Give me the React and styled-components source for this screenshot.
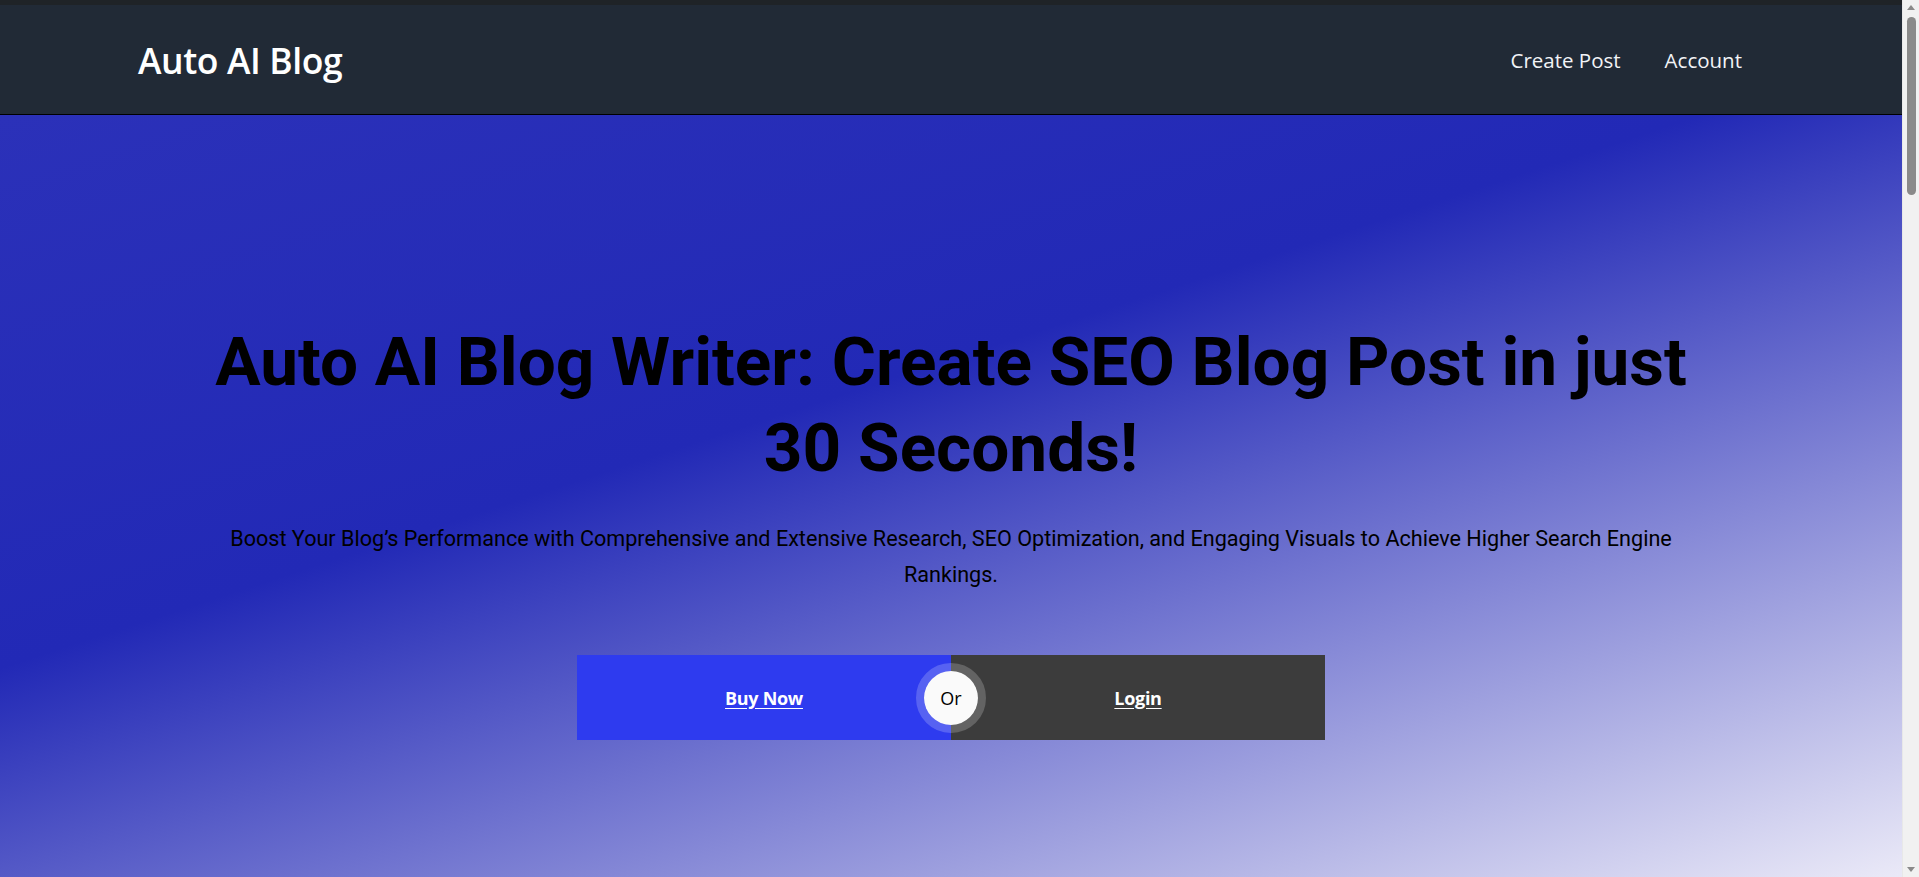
import React from "react";
import styled, { createGlobalStyle } from "styled-components";

const GlobalStyle = createGlobalStyle`
  *, *::before, *::after { box-sizing: border-box; }
  html, body { margin: 0; padding: 0; }
  body {
    font-family: "Open Sans", "Noto Sans", sans-serif;
    background: #f1f1f1;
  }
`;

const Page = styled.div`
  display: flex;
  flex-direction: column;
  margin-right: 17px;
`;

const ScrollTrack = styled.div`
  position: fixed;
  top: 0;
  right: 0;
  width: 17px;
  height: 100vh;
  background: #f1f1f1;
  border-left: 1px solid #e8e8e8;
`;

const ScrollThumb = styled.div`
  position: absolute;
  top: 17px;
  left: 4px;
  width: 9px;
  height: 178px;
  border-radius: 5px;
  background: #8a8a8a;
`;

const ScrollArrow = styled.div`
  position: absolute;
  left: 4px;
  width: 0;
  height: 0;
  border-left: 4.5px solid transparent;
  border-right: 4.5px solid transparent;
  ${(p) =>
    p.$dir === "up"
      ? "top: 5px; border-bottom: 5px solid #8a8a8a;"
      : "bottom: 5px; border-top: 5px solid #8a8a8a;"}
`;

const NavBar = styled.header`
  height: 115px;
  border-top: 5px solid #1f2327;
  border-bottom: 1px solid #000000;
  background: #212a36;
  display: flex;
  align-items: center;
  justify-content: space-between;
  padding: 0 138px;
`;

const Brand = styled.a`
  font-family: "Open Sans", "Noto Sans", sans-serif;
  font-size: 35.5px;
  font-weight: 600;
  color: #ffffff;
  text-decoration: none;
  letter-spacing: -0.4px;
`;

const NavLinks = styled.nav`
  display: flex;
  align-items: center;
`;

const NavLink = styled.a`
  font-family: "Open Sans", "Noto Sans", sans-serif;
  font-size: 20.5px;
  color: #f2f4f7;
  text-decoration: none;
  padding: 0 22px;
`;

const Hero = styled.section`
  min-height: 100vh;
  background: linear-gradient(162deg, #2b31b9 0%, #2229b6 37%, #e9e8f7 92%, #f4f3fb 100%);
  display: flex;
  flex-direction: column;
  align-items: center;
  padding-top: 204px;
`;

const Title = styled.h1`
  margin: 0;
  max-width: 1500px;
  font-family: Roboto, "Liberation Sans", sans-serif;
  font-weight: 700;
  font-size: 67.5px;
  line-height: 85.6px;
  color: #000000;
  text-align: center;
`;

const Subtitle = styled.p`
  margin: 31px 0 0;
  max-width: 1500px;
  font-family: Roboto, "Liberation Sans", sans-serif;
  font-size: 21.6px;
  line-height: 36px;
  color: #000000;
  text-align: center;
`;

const ButtonGroup = styled.div`
  position: relative;
  margin-top: 62px;
  display: flex;
  width: 748px;
  height: 85px;
`;

const ActionButton = styled.a`
  flex: 1;
  display: flex;
  align-items: center;
  justify-content: center;
  background: ${(p) => (p.$variant === "dark" ? "#3c3c3c" : "#2e3bef")};
  color: #ffffff;
  font-family: "Open Sans", "Noto Sans", sans-serif;
  font-size: 18px;
  font-weight: 700;
  letter-spacing: -0.3px;
  text-decoration: underline;
  text-underline-offset: 3px;
  cursor: pointer;
`;

const OrBadge = styled.span`
  position: absolute;
  left: 50%;
  top: 50%;
  width: 70px;
  height: 70px;
  transform: translate(-50%, -50%);
  border-radius: 50%;
  border: 8px solid rgba(255, 255, 255, 0.2);
  background-clip: padding-box;
  display: flex;
  align-items: center;
  justify-content: center;
`;

const OrInner = styled.span`
  width: 54px;
  height: 54px;
  border-radius: 50%;
  background: #fafafa;
  display: flex;
  align-items: center;
  justify-content: center;
  font-family: "Open Sans", "Noto Sans", sans-serif;
  font-size: 18px;
  color: #000000;
`;

export default function App() {
  return (
    <>
      <GlobalStyle />
      <Page>
        <NavBar>
          <Brand href="#">Auto AI Blog</Brand>
          <NavLinks>
            <NavLink href="#">Create Post</NavLink>
            <NavLink href="#">Account</NavLink>
          </NavLinks>
        </NavBar>
        <Hero>
          <Title>Auto AI Blog Writer: Create SEO Blog Post in just 30 Seconds!</Title>
          <Subtitle>
            Boost Your Blog’s Performance with Comprehensive and Extensive Research, SEO Optimization, and Engaging Visuals to Achieve Higher Search Engine Rankings.
          </Subtitle>
          <ButtonGroup>
            <ActionButton href="#">Buy Now</ActionButton>
            <ActionButton href="#" $variant="dark">Login</ActionButton>
            <OrBadge>
              <OrInner>Or</OrInner>
            </OrBadge>
          </ButtonGroup>
        </Hero>
      </Page>
      <ScrollTrack>
        <ScrollArrow $dir="up" />
        <ScrollThumb />
        <ScrollArrow $dir="down" />
      </ScrollTrack>
    </>
  );
}
